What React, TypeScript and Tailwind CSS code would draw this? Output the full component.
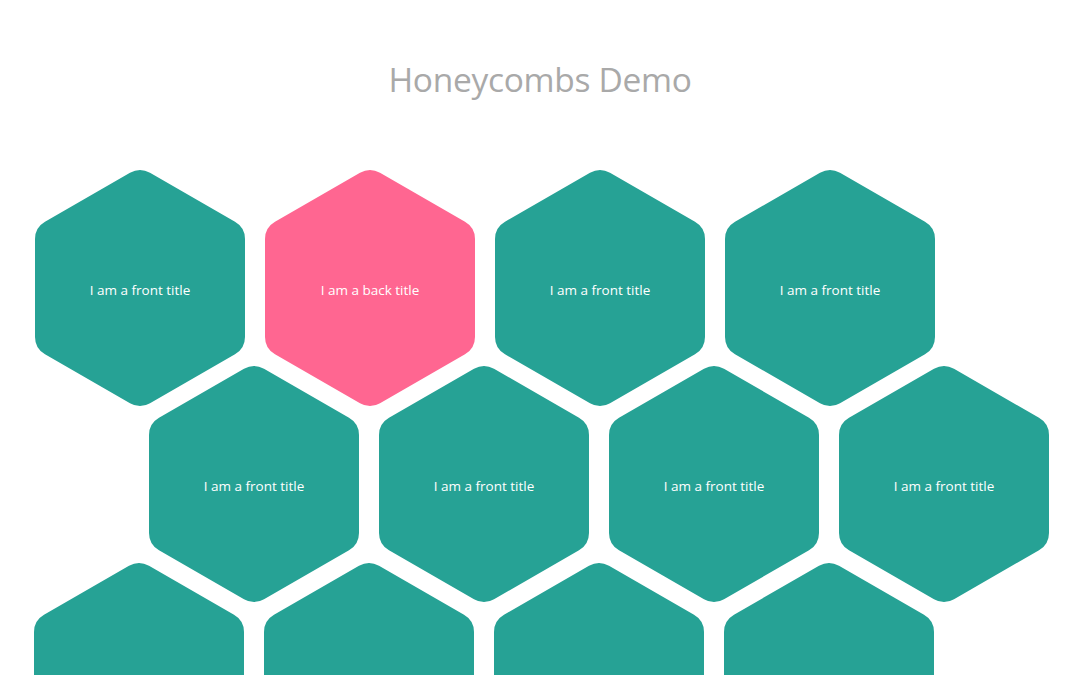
import React from "react";

const W = 210;
const H = 242.49;

function hexPath(r: number): string {
  const pts: [number, number][] = [
    [W / 2, 0],
    [W, H / 4],
    [W, (H * 3) / 4],
    [W / 2, H],
    [0, (H * 3) / 4],
    [0, H / 4],
  ];
  const d = r / Math.tan(Math.PI / 3);
  const n = pts.length;
  let path = "";
  for (let i = 0; i < n; i++) {
    const p = pts[i];
    const prev = pts[(i - 1 + n) % n];
    const next = pts[(i + 1) % n];
    const v1x = prev[0] - p[0];
    const v1y = prev[1] - p[1];
    const l1 = Math.hypot(v1x, v1y);
    const v2x = next[0] - p[0];
    const v2y = next[1] - p[1];
    const l2 = Math.hypot(v2x, v2y);
    const a = [p[0] + (v1x / l1) * d, p[1] + (v1y / l1) * d];
    const b = [p[0] + (v2x / l2) * d, p[1] + (v2y / l2) * d];
    path += `${i === 0 ? "M" : "L"}${a[0].toFixed(2)},${a[1].toFixed(2)} `;
    path += `A${r},${r} 0 0 1 ${b[0].toFixed(2)},${b[1].toFixed(2)} `;
  }
  return path + "Z";
}

const HEX_D = hexPath(20);

function Hex({ label, pink }: { label?: string; pink?: boolean }) {
  return (
    <div className="relative w-[210px] h-[242px] shrink-0 flex items-center justify-center">
      <svg
        className="absolute inset-0 w-full h-full"
        viewBox={`0 0 ${W} ${H}`}
        preserveAspectRatio="none"
      >
        <path d={HEX_D} fill={pink ? "#ff6691" : "#26a295"} />
      </svg>
      {label && (
        <span className="relative text-white text-[13.5px] leading-[20px] mt-[4px] font-['Open_Sans',sans-serif]">
          {label}
        </span>
      )}
    </div>
  );
}

export default function App() {
  return (
    <div className="w-[1080px] h-[675px] overflow-hidden bg-white font-['Open_Sans',sans-serif]">
      <h1 className="pt-[57px] text-center text-[33.5px] leading-[44px] font-normal text-[#a9a9a9] tracking-[-0.3px]">
        Honeycombs Demo
      </h1>
      <div className="mt-[66px] flex flex-col">
        <div className="flex gap-[20px] pl-[35px]">
          <Hex label="I am a front title" />
          <Hex label="I am a back title" pink />
          <Hex label="I am a front title" />
          <Hex label="I am a front title" />
        </div>
        <div className="flex gap-[20px] pl-[149px] mt-[-46px]">
          <Hex label="I am a front title" />
          <Hex label="I am a front title" />
          <Hex label="I am a front title" />
          <Hex label="I am a front title" />
        </div>
        <div className="flex gap-[20px] pl-[34px] mt-[-45px]">
          <Hex />
          <Hex />
          <Hex />
          <Hex />
        </div>
      </div>
    </div>
  );
}
